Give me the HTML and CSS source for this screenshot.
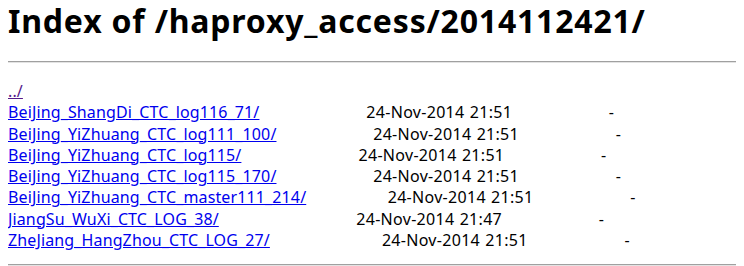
FILE: index.html
```html
<!DOCTYPE html>
<html>
<head>
<meta charset="utf-8">
<title>Index of /haproxy_access/2014112421/</title>
<link rel="stylesheet" href="styles.css">
</head>
<body>
<h1 class="title">Index of /haproxy_access/2014112421/</h1>
<hr class="rule">
<pre class="listing"><a class="visited" href="../">../</a>
<a href="BeiJing_ShangDi_CTC_log116_71/">BeiJing_ShangDi_CTC_log116_71/</a>                     <span class="date">24-Nov-2014 21:51</span>                   -
<a href="BeiJing_YiZhuang_CTC_log111_100/">BeiJing_YiZhuang_CTC_log111_100/</a>                   <span class="date">24-Nov-2014 21:51</span>                   -
<a href="BeiJing_YiZhuang_CTC_log115/">BeiJing_YiZhuang_CTC_log115/</a>                       <span class="date">24-Nov-2014 21:51</span>                   -
<a href="BeiJing_YiZhuang_CTC_log115_170/">BeiJing_YiZhuang_CTC_log115_170/</a>                   <span class="date">24-Nov-2014 21:51</span>                   -
<a href="BeiJing_YiZhuang_CTC_master111_214/">BeiJing_YiZhuang_CTC_master111_214/</a>                <span class="date">24-Nov-2014 21:51</span>                   -
<a href="JiangSu_WuXi_CTC_LOG_38/">JiangSu_WuXi_CTC_LOG_38/</a>                           <span class="date">24-Nov-2014 21:47</span>                   -
<a href="ZheJiang_HangZhou_CTC_LOG_27/">ZheJiang_HangZhou_CTC_LOG_27/</a>                      <span class="date">24-Nov-2014 21:51</span>                   -
</pre>
<hr class="rule">
</body>
</html>
```
FILE: styles.css
```css
html, body {
  background: #ffffff;
}
body {
  margin: 0 8px;
  font-family: "Noto Sans", "Open Sans", sans-serif;
  color: #000000;
}
.title {
  margin: 0;
  font-size: 32px;
  font-weight: bold;
  line-height: 42px;
  letter-spacing: 0.8px;
  font-family: "Noto Sans", sans-serif;
}
.rule {
  margin: 19px 0 0 0;
  border: 0;
  border-top: 1px solid #a0a0a0;
  border-bottom: 1px solid #e3e3e3;
  height: 0;
}
.listing {
  margin: 18px 0 0 0;
  font-family: "Noto Sans", sans-serif;
  font-size: 16px;
  line-height: 21.3px;
  letter-spacing: 0.13px;
  word-spacing: 0.8px;
}
.listing a {
  color: #0000ee;
}
.listing a.visited {
  color: #551a8b;
}
.date {
  letter-spacing: 0.3px;
}
.listing + .rule {
  margin-top: 13px;
}
```
